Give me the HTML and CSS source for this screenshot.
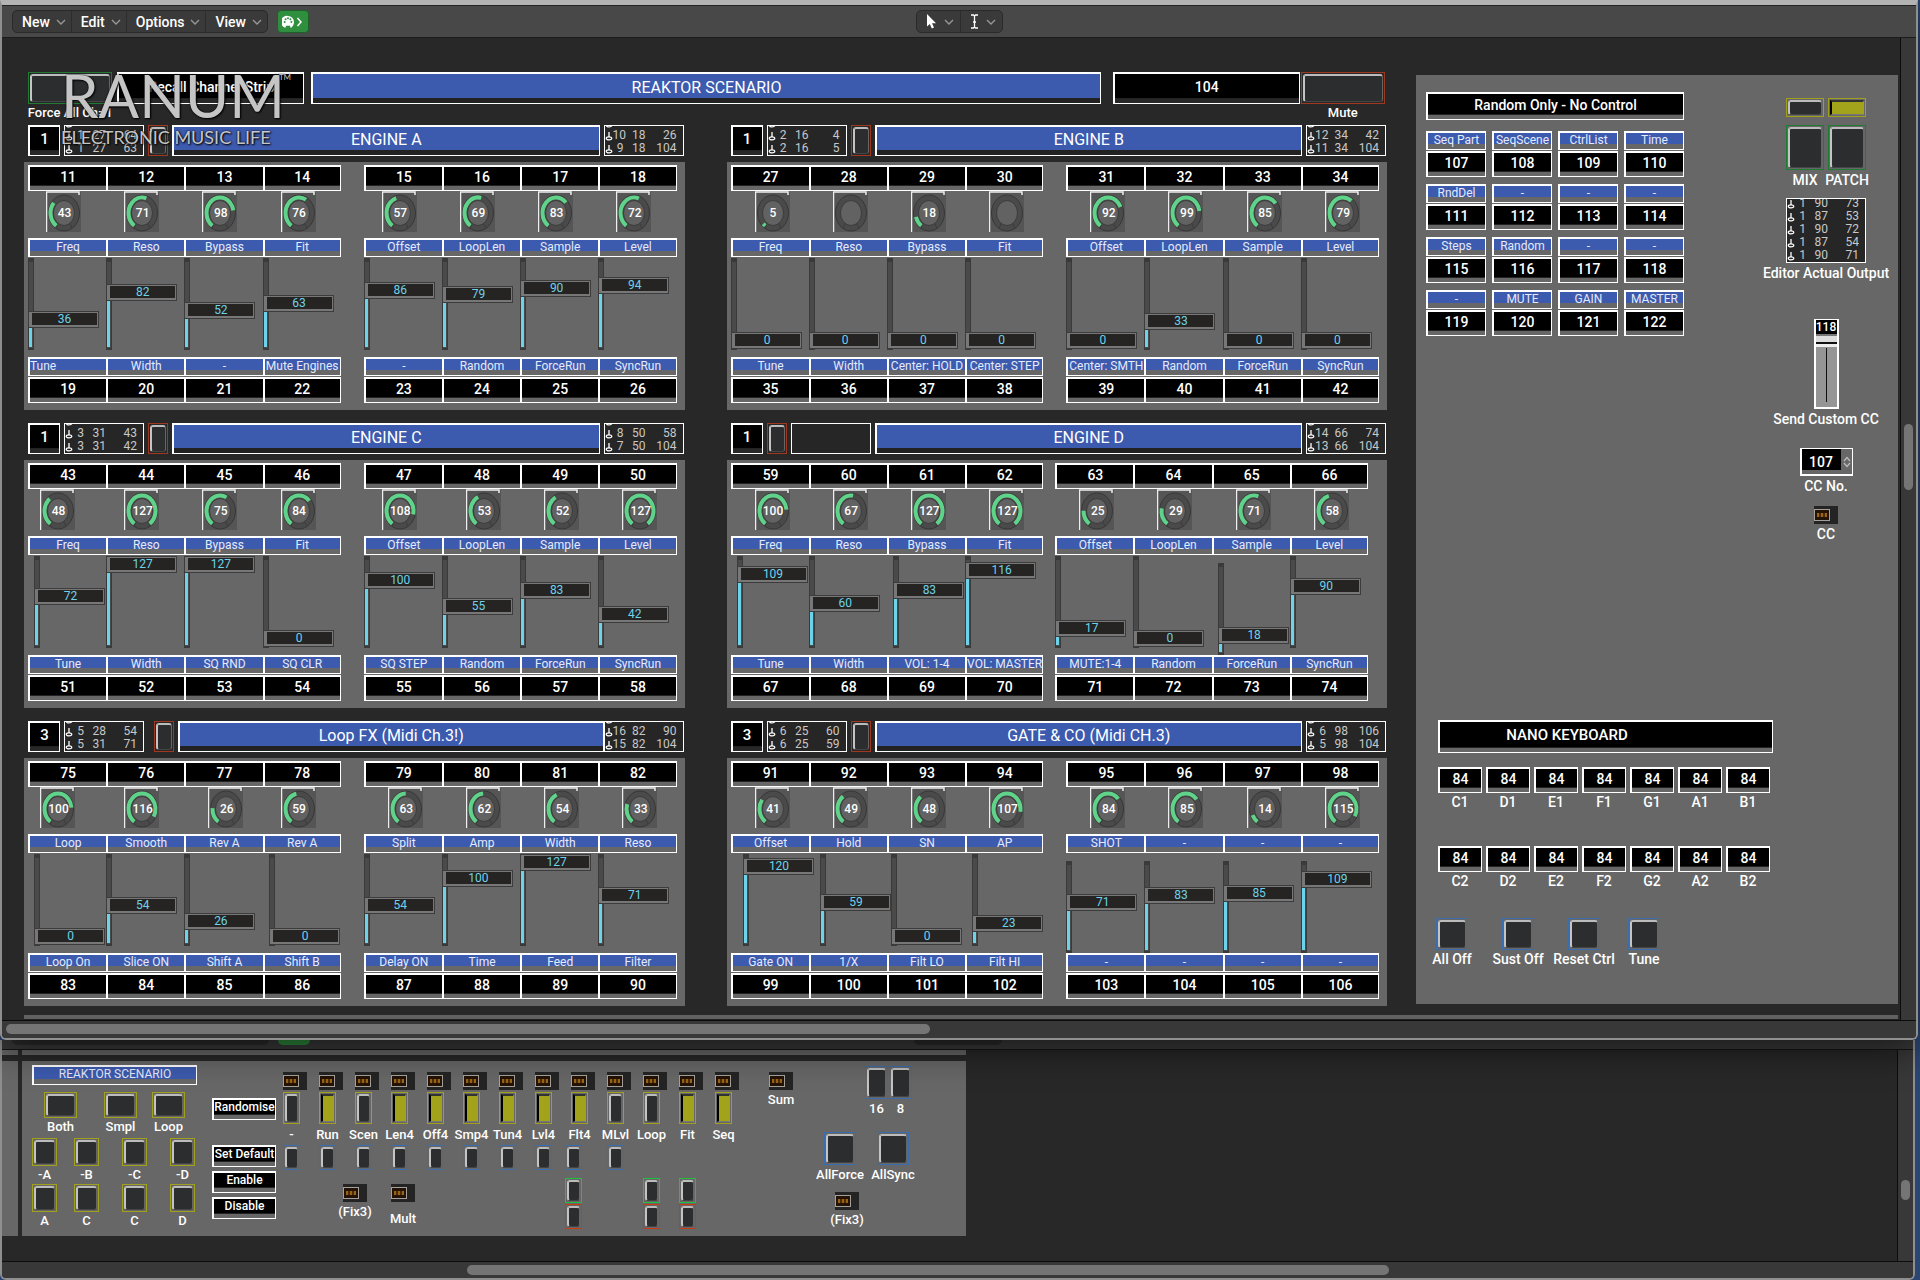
FILE: index.html
```
<!DOCTYPE html>
<html lang="en">
<head>
    <meta charset="UTF-8">
    <meta name="viewport" content="width=device-width, initial-scale=1.0">
    <title>Reaktor Scenario</title>
    <link rel="stylesheet" href="styles.css">
</head>
<body>
    <svg width="0" height="0" class="defs">
        <symbol id="chev" viewBox="0 0 10 6"><path d="M1 1l4 4 4-4" fill="none" stroke="#999" stroke-width="1.3"/></symbol>
        <symbol id="midi" viewBox="0 0 8 9"><path d="M4 0v5" stroke="#fff" stroke-width="1.3"/><ellipse cx="4" cy="6.300" rx="2.800" ry="1.500" fill="none" stroke="#fff" stroke-width="1.2"/></symbol>
    </svg>

    <div class="window front">
        <div class="toolbar">
            <div class="bar-left">
                <div class="menus">
                    <button>New <svg width="10" height="6"><use href="#chev"/></svg></button>
                    <button>Edit <svg width="10" height="6"><use href="#chev"/></svg></button>
                    <button>Options <svg width="10" height="6"><use href="#chev"/></svg></button>
                    <button>View <svg width="10" height="6"><use href="#chev"/></svg></button>
                </div>
                <button class="midi-btn" aria-label="MIDI out">
                    <svg width="22" height="14" viewBox="0 0 22 14">
                        <path d="M6 1a6 6 0 0 1 6 6c0 2-1 4-2.400 5.400H8.200v-1.600H3.800v1.600H2.400A6 6 0 0 1 6 1z" fill="#fff"/>
                        <g fill="#2f8f3e"><circle cx="2.600" cy="7" r="1"/><circle cx="3.600" cy="4.300" r="1"/><circle cx="6" cy="3.200" r="1"/><circle cx="8.400" cy="4.300" r="1"/><circle cx="9.400" cy="7" r="1"/></g>
                        <path d="M15.500 3l3.500 4-3.500 4" fill="none" stroke="#fff" stroke-width="1.500"/>
                    </svg>
                </button>
            </div>
            <div class="menus tools">
                <button aria-label="Pointer tool">
                    <svg width="11" height="15" viewBox="0 0 11 15"><path d="M1 0v12.500l2.800-2.500 2 4.500 2.200-1-2-4.300h4z" fill="#fff"/></svg>
                    <svg width="10" height="6"><use href="#chev"/></svg>
                </button>
                <button aria-label="Text tool">
                    <svg width="9" height="15" viewBox="0 0 9 15"><path d="M1 1h2.500l1 1 1-1H8M1 14h2.500l1-1 1 1H8M4.500 2v11M3 8h3" fill="none" stroke="#fff" stroke-width="1.300"/></svg>
                    <svg width="10" height="6"><use href="#chev"/></svg>
                </button>
            </div>
        </div>

        <div class="view">
            <div class="canvas">
                <div class="desk">
                    <main class="left">
                        <div class="logo">
                            <div class="logo-name">RANUM<sup>TM</sup></div>
                            <div class="logo-sub">ELECTRONIC MUSIC LIFE</div>
                        </div>
                        <div class="top-row">
                            <div class="field w-btn"><button class="pad green" id="force"></button><label for="force">Force All Ch=1</label></div>
                            <div class="box num w-strip">Recall Channel Strip</div>
                            <div class="box blue title w-title">REAKTOR SCENARIO</div>
                            <div class="box num w-chan">104</div>
                            <div class="field w-btn"><button class="pad red" id="mute"></button><label for="mute">Mute</label></div>
                        </div>
                        <div class="engines" id="engines"></div>
                    </main>

                    <aside class="side">
                        <div class="side-top">
                            <div class="random">
                                <div class="box num random-title">Random Only - No Control</div>
                                <div class="params" id="params"></div>
                            </div>
                            <div class="output">
                                <div class="pair small"><button class="pad yellow" aria-label="Mix off"></button><button class="pad yellow on" aria-label="Patch on"></button></div>
                                <div class="pair">
                                    <div class="field"><button class="pad green" id="mix"></button><label for="mix">MIX</label></div>
                                    <div class="field"><button class="pad green" id="patch"></button><label for="patch">PATCH</label></div>
                                </div>
                                <div class="events" id="output"></div>
                                <div class="cap">Editor Actual Output</div>
                                <div class="fader">
                                    <output>118</output>
                                    <div class="fader-cap"></div>
                                    <input type="range" id="custom" min="0" max="127" value="118">
                                </div>
                                <label class="cap" for="custom">Send Custom CC</label>
                                <div class="ccno">
                                    <input type="text" id="ccno" value="107">
                                    <svg width="8" height="12" viewBox="0 0 8 12"><path d="M1 5l3-3.500L7 5M1 7l3 3.500L7 7" fill="none" stroke="#bbb" stroke-width="1.300"/></svg>
                                </div>
                                <label class="cap" for="ccno">CC No.</label>
                                <span class="led cc-led"></span>
                                <div class="cap">CC</div>
                            </div>
                        </div>
                        <div class="nano">
                            <div class="box num nano-title">NANO KEYBOARD</div>
                            <div class="keys" id="keys"></div>
                            <div class="nano-btns">
                                <div class="field"><button class="pad blue-line" id="alloff"></button><label for="alloff">All Off</label></div>
                                <div class="field"><button class="pad blue-line" id="sust"></button><label for="sust">Sust Off</label></div>
                                <div class="field"><button class="pad blue-line" id="reset"></button><label for="reset">Reset Ctrl</label></div>
                                <div class="field"><button class="pad blue-line" id="tune"></button><label for="tune">Tune</label></div>
                            </div>
                        </div>
                    </aside>
                </div>
                <div class="next-strip"></div>
            </div>
            <div class="vscroll"><div class="thumb"></div></div>
        </div>
        <div class="hscroll"><div class="thumb"></div></div>
    </div>

    <div class="window back">
        <div class="back-bar"><i class="stub-menus"></i><i class="stub-midi"></i><i class="stub-tools"></i></div>
        <div class="view">
            <div class="canvas">
                <div class="edge"><i></i><i></i></div>
                <div class="board-row">
                    <div class="gutter"></div>
                    <section class="board">
                        <div class="scen">
                            <div class="box blue scen-title">REAKTOR SCENARIO</div>
                            <div class="scen-row big" id="rowBig"></div>
                            <div class="scen-row" id="rowMinus"></div>
                            <div class="scen-row" id="rowPlus"></div>
                        </div>
                        <div class="actions">
                            <button class="box num">Randomise</button>
                            <button class="box num">Set Default</button>
                            <button class="box num">Enable</button>
                            <button class="box num">Disable</button>
                        </div>
                        <div class="switches">
                            <div class="sw-cols" id="switches"></div>
                            <div class="sw-extra">
                                <div class="field fix"><span class="led"></span><span>(Fix3)</span></div>
                                <div class="field mult"><span class="led"></span><span>Mult</span></div>
                                <div class="duo"><button class="pad lime" aria-label="Flt4 enable"></button><button class="pad red2" aria-label="Flt4 disable"></button></div>
                                <div class="duo"><button class="pad lime" aria-label="Loop enable"></button><button class="pad red2" aria-label="Loop disable"></button></div>
                                <div class="duo"><button class="pad lime" aria-label="Fit enable"></button><button class="pad red2" aria-label="Fit disable"></button></div>
                            </div>
                        </div>
                        <div class="field sum"><span class="led"></span><span>Sum</span></div>
                        <div class="sync">
                            <div class="sync-row narrow">
                                <div class="field"><button class="pad blue-line" id="b16"></button><label for="b16">16</label></div>
                                <div class="field"><button class="pad blue-line" id="b8"></button><label for="b8">8</label></div>
                            </div>
                            <div class="sync-row">
                                <div class="field"><button class="pad blue-line" id="allforce"></button><label for="allforce">AllForce</label></div>
                                <div class="field"><button class="pad blue-line" id="allsync"></button><label for="allsync">AllSync</label></div>
                            </div>
                            <div class="field sync-fix"><span class="led"></span><span>(Fix3)</span></div>
                        </div>
                    </section>
                </div>
            </div>
            <div class="vscroll"><div class="thumb"></div></div>
        </div>
        <div class="hscroll"><div class="thumb"></div></div>
    </div>
    <script src="script.js"></script>
</body>
</html>
```
FILE: styles.css
```
*, *::after { box-sizing: border-box; }
body {
    margin: 0;
    background: #2b4673;
    color: #fff;
    font-family: Roboto, "Liberation Sans", sans-serif;
    font-size: 14px;
    font-weight: 500;
    line-height: 16px;
}
button, input {
    font: inherit;
    color: inherit;
    margin: 0;
    padding: 0;
    border: 0;
    background: none;
}
.defs { position: absolute; }
.window {
    background: #282828;
    border: 2px solid #8f8f8f;
    overflow: hidden;
}
.front {
    position: relative;
    z-index: 1;
    margin-right: 2px;
    border-top: 5px solid #b3b3b3;
    border-radius: 0 0 6px 6px;
    box-shadow: 0 8px 36px rgba(0, 0, 0, 0.6);
}
.back {
    margin-right: 5px;
    border-top: 0;
    border-radius: 0 0 6px 6px;
}

/* toolbar */
.toolbar {
    display: grid;
    grid-template-columns: 1fr auto 1fr;
    align-items: center;
    height: 33px;
    padding: 0 10px;
    background: #484848;
    border-top: 1px solid #222;
    border-bottom: 1px solid #1c1c1c;
}
.bar-left { display: flex; gap: 9px; }
.menus {
    display: flex;
    height: 23px;
    background: #3a3a3a;
    border: 1px solid #2a2a2a;
    border-radius: 5px;
}
.menus button {
    display: flex;
    align-items: center;
    gap: 6px;
    padding: 0 5px 0 9px;
}
.menus button + button { border-left: 1px solid #2c2c2c; }
.tools button { padding: 0 6px 0 9px; gap: 7px; }
.midi-btn {
    width: 32px;
    height: 23px;
    border-radius: 4px;
    background: #2f8f3e;
    border: 1px solid #1f5f2a;
    display: flex;
    align-items: center;
    justify-content: center;
}

/* scrolling */
.view { display: flex; }
.canvas { flex: 1; min-width: 0; }
.vscroll {
    width: 16px;
    background: #383838;
    border-left: 1px solid #0c0c0c;
    padding: 0 3px;
}
.hscroll {
    height: 18px;
    background: #383838;
    border-top: 1px solid #0c0c0c;
    padding: 3px 4px;
}
.back .hscroll { height: 17px; }
.thumb { background: #757575; border-radius: 5px; }
.front .vscroll .thumb { height: 66px; margin-top: 386px; }
.front .hscroll .thumb { height: 10px; width: 48.5%; }
.back .vscroll .thumb { height: 20px; margin-top: 130px; }
.back .hscroll .thumb { height: 10px; width: 48.5%; margin-left: 24.2%; }

/* shared boxes */
.box {
    border: solid #fff;
    border-width: 2px 1px 1px 2px;
    text-align: center;
    white-space: nowrap;
    display: flex;
    justify-content: center;
}
.num { background: linear-gradient(to top, transparent 4px, #222 4px, #222 5px, #000 5px); }
.blue { background: linear-gradient(to top, transparent 5px, #3c5aae 5px); color: #e6eafa; }
.title {
    background: linear-gradient(to top, #222 5px, #3c5aae 5px);
    font-size: 16px;
    font-weight: 400;
    line-height: 25px;
    color: #fff;
}
.pad {
    display: block;
    border: 1px solid #555;
    padding: 1px;
}
.pad::after {
    content: "";
    display: block;
    width: 100%;
    height: 100%;
    background: #2b2d2f;
    border: solid;
    border-width: 2px 1px 1px 2px;
    border-color: #bcbcbc #666 #444 #c4c4c4;
    border-radius: 3px;
}
.pad.green { border-color: #1f7a34; }
.pad.lime { border-color: #1fc23a; }
.pad.red { border-color: #a03820; }
.pad.red2 { border-color: #cc3a14; }
.pad.yellow { border-color: #a0a01c; }
.pad.blue-line { border-color: #3a6cb0; }
.pad.on::after { background: #a2a31a; border-color: #333 #a2a31a #777 #000; border-radius: 0; }
.field {
    display: flex;
    flex-direction: column;
    align-items: center;
    white-space: nowrap;
}
.led {
    display: block;
    width: 24px;
    height: 18px;
    background: #242424;
    padding: 3px 8px 3px 0;
}
.led::after {
    content: "";
    display: block;
    height: 12px;
    border: 1px solid #a5a09a;
    padding: 3px 2px;
    background: repeating-linear-gradient(90deg, #9a6414 0 2px, #4a2c08 2px 4px) content-box, #241204;
}
.events {
    display: flex;
    flex-direction: column;
    justify-content: flex-end;
    border: 1px solid #fff;
    background: #262626;
    width: 80px;
    overflow: hidden;
    font-size: 12px;
    font-weight: 400;
    line-height: 13px;
    color: #c8c8c8;
}
.event {
    display: grid;
    grid-template-columns: 8px 11px 22px 1fr;
    text-align: right;
    flex: none;
    height: 13px;
    padding-right: 6px;
}
.event svg { margin-top: 3px; }

/* desk */
.desk {
    display: grid;
    grid-template-columns: 1363fr 482fr;
    gap: 29px;
    padding: 34px 2px 0 22px;
}
.left { position: relative; }
.logo {
    position: absolute;
    z-index: 2;
    left: 37px;
    top: -9px;
    font-family: Lato, sans-serif;
    font-weight: 400;
    color: rgba(232, 232, 232, 0.85);
    text-shadow: 0 0 2px #000, 1px 1px 2px #000;
    pointer-events: none;
}
.logo-name { font-size: 60px; line-height: 64px; }
.logo-name sup { font-size: 8px; line-height: 8px; vertical-align: 38px; margin-left: -6px; }
.logo-sub { font-size: 18px; line-height: 20px; }
.top-row {
    display: flex;
    align-items: flex-start;
    height: 53px;
    padding: 0 2px 0 4px;
}
.top-row .box { height: 32px; line-height: 27px; }
.top-row .pad { width: 100%; height: 32px; }
.top-row label { font-size: 13px; line-height: 18px; }
.w-btn { flex: 85 1 0; min-width: 0; }
.w-strip { flex: 185 1 0; margin: 0 7px 0 5px; }
.w-title { flex: 792 1 0; }
.w-chan { flex: 185 1 0; margin: 0 1px 0 12px; }
.engines {
    display: grid;
    grid-template-columns: 1fr 1fr;
    gap: 13px 42px;
}

/* engine */
.engine-head {
    display: flex;
    gap: 4px;
    height: 31px;
    margin: 0 1px 6px 4px;
}
.engine-head .chan { width: 32px; line-height: 25px; font-size: 15px; }
.engine-head .pad { width: 20px; }
.engine-head .title { flex: 1; }
.engine-head .pad.nudged { margin-left: 6px; }
.engine-head .title.nudged { margin-right: -4px; }
.engine-body {
    display: flex;
    gap: 23px;
    padding: 3px 8px 7px 4px;
    background: #676767;
}
.engine-body.tight { gap: 12px; padding-right: 19px; }
.group { flex: 1; min-width: 0; }
.cols { display: grid; grid-template-columns: repeat(4, 1fr); }
.cols .box { border-right-width: 0; min-width: 0; }
.cols .box:last-child { border-right-width: 1px; }
.cols .num { height: 26px; line-height: 20px; }
.tag {
    height: 19px;
    font-size: 12px;
    font-weight: 400;
    line-height: 14px;
}
.tag.start { justify-content: flex-start; }
.cols.after { margin-top: 1px; }
.knobs { height: 41px; margin-bottom: 6px; }
.knob { display: grid; width: 35px; height: 41px; margin-left: 18px; }
.knob.near { margin-left: 12px; }
.knob.far { margin-left: 24px; }
.knob > * { grid-area: 1 / 1; }
.knob output {
    align-self: center;
    text-align: center;
    padding: 2px 0 0 2px;
    font-size: 12px;
}
.knob input { opacity: 0; width: 35px; height: 41px; }
.sliders { height: 92px; margin: 1px 0 7px; }
.slider { position: relative; width: 71px; height: 92px; }
.slider.in { margin-left: 6px; }
.slider.in2 { margin-left: 12px; }
.slider.low { margin-top: 7px; }
.slider input {
    display: block;
    appearance: none;
    writing-mode: vertical-lr;
    direction: rtl;
    width: 6px;
    height: 92px;
    background: #4a4a4a;
    border: solid #3a3a3a;
    border-width: 4px 1px 2px;
}
.slider input::-webkit-slider-thumb { appearance: none; width: 6px; height: 16px; }
.slider .fill {
    position: absolute;
    left: 1px;
    bottom: 3px;
    width: 3px;
    background: #6dd3ea;
}
.slider output {
    position: absolute;
    left: 0;
    width: 71px;
    height: 17px;
    border: solid #777;
    border-width: 2px 2px 3px 4px;
    outline: 1px solid #3c3c3c;
    outline-offset: -1px;
    background: #262323;
    color: #6dd3ea;
    font-size: 12px;
    font-weight: 400;
    line-height: 13px;
    text-align: center;
}

/* right side */
.side {
    display: flex;
    flex-direction: column;
    justify-content: space-between;
    margin: 3px 0 2px;
    padding: 17px 32px 37px 10px;
    background: #676767;
}
.side-top { display: flex; justify-content: space-between; }
.random { width: 258px; }
.random-title { height: 28px; line-height: 22px; margin-bottom: 11px; }
.params {
    display: grid;
    grid-template-columns: repeat(4, 1fr);
    gap: 7px 6px;
}
.params .num { height: 26px; line-height: 20px; margin-top: 1px; }
.output {
    display: flex;
    flex-direction: column;
    align-items: center;
    width: 80px;
    margin-top: 6px;
}
.pair { display: flex; gap: 4px; margin-bottom: 10px; }
.pair .field { width: 38px; }
.pair .pad { width: 38px; height: 45px; }
.pair.small { margin-bottom: 8px; }
.pair.small .pad { height: 19px; }
.pair label, .cap { padding-top: 2px; white-space: nowrap; }
.output .events { height: 65px; flex: none; }
.cap { height: 18px; }
.fader {
    position: relative;
    width: 25px;
    height: 90px;
    margin-top: 38px;
    border: 2px solid #fff;
    border-width: 1px 2px 2px;
    background: linear-gradient(#111, #111) 10px 28px / 1px 54px no-repeat #959595;
}
.fader output { display: block; background: #000; font-size: 12px; line-height: 14px; text-align: center; }
.fader-cap { height: 13px; background: linear-gradient(#777 0 2px, #ddd 2px 8px, #111 8px 10px, #eee 10px); }
.fader input { position: absolute; inset: 0; width: 21px; opacity: 0; }
.ccno {
    display: flex;
    align-items: center;
    width: 53px;
    height: 28px;
    margin-top: 21px;
    border: 2px solid #fff;
    border-width: 1px 1px 2px 2px;
    background: linear-gradient(to top, transparent 4px, #000 4px) no-repeat 0 0 / 39px 100%;
}
.ccno input { width: 39px; text-align: center; }
.ccno svg { margin-left: 2px; }
.cc-led { margin-top: 12px; flex: none; }
.nano { margin-left: 12px; }
.nano-title {
    width: 335px;
    height: 33px;
    font-size: 15px;
    line-height: 27px;
    padding-right: 78px;
    margin-bottom: 14px;
}
.keys { display: grid; grid-template-columns: repeat(7, 44px); gap: 35px 4px; }
.keys .num { height: 26px; line-height: 20px; width: 44px; }
.keys .field span { line-height: 18px; }
.nano-btns { display: flex; gap: 34px; margin: 28px 0 0 -2px; }
.nano-btns .field { width: 32px; }
.nano-btns .field:last-child { margin-left: -6px; }
.nano-btns .pad { width: 32px; height: 32px; }
.nano-btns label { padding-top: 1px; }
.next-strip { height: 5px; margin: 9px 2px 0 22px; background: #616161; border-bottom: 1px solid #222; }

/* window behind */
.back-bar {
    display: flex;
    height: 10px;
    background: #3a3a3a;
    border-bottom: 1px solid #151515;
    padding-left: 10px;
}
.back-bar i { height: 5px; background: #2c2c2c; border-radius: 0 0 5px 5px; }
.stub-menus { width: 257px; margin-right: 9px; }
.back-bar .stub-midi { width: 32px; background: #2f8f3e; }
.stub-tools { width: 88px; margin-left: 604px; }
.edge { display: flex; gap: 4px; height: 11px; padding-bottom: 6px; }
.edge i { background: #676767; }
.edge i:first-child, .gutter { width: 16px; }
.edge i:last-child { width: 944px; }
.board-row { display: flex; gap: 4px; height: 200px; padding-bottom: 25px; }
.gutter { background: #676767; }
.board {
    display: flex;
    align-items: flex-start;
    width: 944px;
    background: #676767;
    padding: 4px 0 0 10px;
    font-size: 13px;
}
.scen { width: 165px; }
.scen-title {
    height: 20px;
    font-size: 12px;
    font-weight: 400;
    line-height: 14px;
    margin-bottom: 7px;
}
.scen-row { display: flex; gap: 23px; height: 46px; }
.scen-row .field { width: 25px; }
.scen-row .field:first-child { margin-right: -6px; }
.scen-row .pad { width: 25px; height: 28px; }
.scen-row label { line-height: 18px; }
.scen-row.big { gap: 15px; padding-left: 12px; }
.scen-row.big .field { width: 33px; }
.scen-row.big .field:first-child { margin-right: 12px; }
.scen-row.big .pad { width: 33px; height: 26px; }
.actions {
    display: flex;
    flex-direction: column;
    gap: 4px;
    width: 64px;
    margin: 33px 0 0 15px;
}
.actions .box { width: 64px; height: 22px; font-size: 12px; line-height: 15px; }
.actions .box:first-child { margin-bottom: 21px; }
.switches { margin: 7px 0 0 7px; }
.sw-cols { display: flex; height: 98px; margin-bottom: 8px; }
.sw { width: 36px; display: flex; flex-direction: column; }
.sw .field { width: 17px; margin-top: 2px; }
.sw .pad { width: 17px; height: 32px; }
.sw label { line-height: 21px; }
.sw .mini { height: 25px; }
.sw .mini.out { margin-left: -6px; }
.sw-extra { display: flex; align-items: flex-start; padding-left: 60px; }
.sw-extra .field { width: 24px; margin-top: 6px; }
.fix span + span { line-height: 20px; }
.mult { margin: 0 150px 0 24px; }
.mult span + span { padding-top: 9px; }
.duo { display: flex; flex-direction: column; gap: 1px; }
.duo + .duo { margin-left: 61px; }
.duo + .duo + .duo { margin-left: 19px; }
.duo .pad { width: 17px; height: 25px; }
.sum { width: 24px; margin: 7px 0 0 18px; }
.sum span + span { line-height: 20px; }
.sync { margin-left: 31px; width: 88px; }
.sync-row { display: flex; gap: 21px; margin-bottom: 7px; }
.sync-row .field { width: 32px; }
.sync-row .pad { width: 32px; height: 33px; }
.sync-row label { line-height: 20px; }
.sync-row.narrow { gap: 1px; margin: 1px 0 13px; padding-left: 41px; }
.sync-row.narrow .field, .sync-row.narrow .pad { width: 23px; }
.sync-fix { width: 24px; margin-left: 11px; }
.sync-fix span + span { line-height: 20px; }
```
FILE: script.js
```
// each group: knob values, knob labels, slider values, bottom labels
const engines = [
    {
        chan: 1, name: "ENGINE A", first: 11,
        left: ["1 27 65", "1 27 64", "1 27 63"], right: ["9 17 104", "10 18 26", "9 18 104"],
        knobs: [43, 71, 98, 76, 57, 69, 83, 72],
        tags: ["Freq", "Reso", "Bypass", "Fit", "Offset", "LoopLen", "Sample", "Level"],
        sliders: [36, 82, 52, 63, 86, 79, 90, 94],
        low: ["Tune", "Width", "-", "Mute Engines", "-", "Random", "ForceRun", "SyncRun"],
        startTag: true
    },
    {
        chan: 1, name: "ENGINE B", first: 27,
        left: ["2 16 6", "2 16 4", "2 16 5"], right: ["11 33 104", "12 34 42", "11 34 104"],
        knobs: [5, 0, 18, 0, 92, 99, 85, 79],
        tags: ["Freq", "Reso", "Bypass", "Fit", "Offset", "LoopLen", "Sample", "Level"],
        sliders: [0, 0, 0, 0, 0, 33, 0, 0],
        low: ["Tune", "Width", "Center: HOLD", "Center: STEP", "Center: SMTH", "Random", "ForceRun", "SyncRun"],
        knobPos: "ffffffff"
    },
    {
        chan: 1, name: "ENGINE C", first: 43,
        left: ["3 31 44", "3 31 43", "3 31 42"], right: ["7 49 104", "8 50 58", "7 50 104"],
        knobs: [48, 127, 75, 84, 108, 53, 52, 127],
        tags: ["Freq", "Reso", "Bypass", "Fit", "Offset", "LoopLen", "Sample", "Level"],
        sliders: [72, 127, 127, 0, 100, 55, 83, 42],
        low: ["Tune", "Width", "SQ RND", "SQ CLR", "SQ STEP", "Random", "ForceRun", "SyncRun"],
        knobPos: "n....fff", sliderPos: "1......."
    },
    {
        chan: 1, name: "ENGINE D", first: 59, padFirst: true, tight: true,
        left: [], right: ["13 65 104", "14 66 74", "13 66 104"],
        knobs: [100, 67, 127, 127, 25, 29, 71, 58],
        tags: ["Freq", "Reso", "Bypass", "Fit", "Offset", "LoopLen", "Sample", "Level"],
        sliders: [109, 60, 83, 116, 17, 0, 18, 90],
        low: ["Tune", "Width", "VOL: 1-4", "VOL: MASTER", "MUTE:1-4", "Random", "ForceRun", "SyncRun"],
        knobPos: "ffffffff", sliderPos: "1.1...L."
    },
    {
        chan: 3, name: "Loop FX (Midi Ch.3!)", first: 75, nudged: true,
        left: ["5 31 72", "5 28 54", "5 31 71"], right: ["15 81 104", "16 82 90", "15 82 104"],
        knobs: [100, 116, 26, 59, 63, 62, 54, 33],
        tags: ["Loop", "Smooth", "Rev A", "Rev A", "Split", "Amp", "Width", "Reso"],
        sliders: [0, 54, 26, 0, 54, 100, 127, 71],
        low: ["Loop On", "Slice ON", "Shift A", "Shift B", "Delay ON", "Time", "Feed", "Filter"],
        knobPos: "n.f.ffff", sliderPos: "1..1...."
    },
    {
        chan: 3, name: "GATE & CO (Midi CH.3)", first: 91,
        left: ["6 25 61", "6 25 60", "6 25 59"], right: ["5 97 104", "6 98 106", "5 98 104"],
        knobs: [41, 49, 48, 107, 84, 85, 14, 115],
        tags: ["Offset", "Hold", "SN", "AP", "SHOT", "-", "-", "-"],
        sliders: [120, 59, 0, 23, 71, 83, 85, 109],
        low: ["Gate ON", "1/X", "Filt LO", "Filt HI", "-", "-", "-", "-"],
        knobPos: "ffffffff", sliderPos: "21.1llll"
    }
];

const knobClass = { n: "near", f: "far", ".": "" };
const sliderClass = { 1: "in", 2: "in2", l: "low", L: "in low", ".": "" };

function events(rows) {
    return rows.map(r => {
        const [a, b, c] = r.split(" ");
        return `<div class="event"><svg width="8" height="9"><use href="#midi"/></svg><span>${a}</span><span>${b}</span><span>${c}</span></div>`;
    }).join("");
}

function knob(value, name, pos) {
    const arc = "M10.3 34.7A13.5 15.5 0 1 1 25.7 34.7";
    const lit = value ? `<path d="${arc}" pathLength="127" stroke-dasharray="${value} 200" fill="none" stroke="#5fd38a" stroke-width="4"/>` : "";
    return `<div><div class="knob ${knobClass[pos]}">
        <svg width="35" height="41" viewBox="0 0 35 41">
            <path d="M0 1h35v40H0z" fill="#555"/>
            <ellipse cx="18" cy="22" rx="15.500" ry="18" fill="#4a4a4a" stroke="#383838"/>
            <path d="M18 22L26 37M18 22L10 37" stroke="#3a3a3a"/>
            ${lit}
            <ellipse cx="18" cy="22" rx="10.500" ry="12.500" fill="#626262" stroke="#3c3c3c"/>
            <path d="M.5 41V1M0 1h33v3" fill="none" stroke="#eee" stroke-width="1.500"/>
        </svg>
        <output>${value || ""}</output>
        <input type="range" min="0" max="127" value="${value}" aria-label="${name}">
    </div></div>`;
}

function slider(value, name, pos) {
    const top = Math.round((127 - value) * 74 / 127);
    return `<div><div class="slider ${sliderClass[pos]}">
        <input type="range" min="0" max="127" value="${value}" aria-label="${name}">
        <div class="fill" style="height:${Math.max(72 - top, 0)}px"></div>
        <output style="top:${top}px">${value}</output>
    </div></div>`;
}

function group(e, from) {
    const idx = [0, 1, 2, 3].map(i => i + from);
    const kp = e.knobPos || "........";
    const sp = e.sliderPos || "........";
    return `<div class="group">
        <div class="cols">${idx.map(i => `<div class="box num">${e.first + i}</div>`).join("")}</div>
        <div class="cols knobs">${idx.map(i => knob(e.knobs[i], e.tags[i], kp[i])).join("")}</div>
        <div class="cols">${idx.map(i => `<div class="box blue tag">${e.tags[i]}</div>`).join("")}</div>
        <div class="cols sliders">${idx.map(i => slider(e.sliders[i], e.low[i], sp[i])).join("")}</div>
        <div class="cols">${idx.map(i => `<div class="box blue tag ${e.startTag && i === 0 ? "start" : ""}">${e.low[i]}</div>`).join("")}</div>
        <div class="cols after">${idx.map(i => `<div class="box num">${e.first + 8 + i}</div>`).join("")}</div>
    </div>`;
}

document.getElementById("engines").innerHTML = engines.map(e => {
    const list = `<div class="events">${events(e.left)}</div>`;
    const pad = `<button class="pad red ${e.nudged ? "nudged" : ""}" aria-label="Mute ${e.name}"></button>`;
    return `<section class="engine">
        <div class="engine-head">
            <div class="box num chan">${e.chan}</div>
            ${e.padFirst ? pad + list : list + pad}
            <div class="box title ${e.nudged ? "nudged" : ""}">${e.name.replace("&", "&amp;")}</div>
            <div class="events">${events(e.right)}</div>
        </div>
        <div class="engine-body ${e.tight ? "tight" : ""}">${group(e, 0)}${group(e, 4)}</div>
    </section>`;
}).join("");

const params = ["Seq Part", "SeqScene", "CtrlList", "Time", "RndDel", "-", "-", "-", "Steps", "Random", "-", "-", "-", "MUTE", "GAIN", "MASTER"];
document.getElementById("params").innerHTML = params.map((p, i) =>
    `<div><div class="box blue tag">${p}</div><div class="box num">${107 + i}</div></div>`).join("");

document.getElementById("output").innerHTML = events(["1 90 73", "1 87 53", "1 90 72", "1 87 54", "1 90 71"]);

document.getElementById("keys").innerHTML = [1, 2].map(o => [..."CDEFGAB"].map(k =>
    `<div class="field"><div class="box num">84</div><span>${k}${o}</span></div>`).join("")).join("");

function pads(id, names) {
    document.getElementById(id).innerHTML = names.map((n, i) =>
        `<div class="field"><button class="pad yellow" id="${id}${i}"></button><label for="${id}${i}">${n}</label></div>`).join("");
}
pads("rowBig", ["Both", "Smpl", "Loop"]);
pads("rowMinus", ["-A", "-B", "-C", "-D"]);
pads("rowPlus", ["A", "C", "C", "D"]);

const switches = ["-", "Run*", "Scen", "Len4*", "Off4*", "Smp4*", "Tun4*", "Lvl4*", "Flt4*", "MLvl", "Loop", "Fit*", "Seq*"];
document.getElementById("switches").innerHTML = switches.map((s, i) => {
    const on = s.endsWith("*");
    const name = s.replace("*", "");
    const mini = i < 10 ? `<button class="pad blue-line mini ${i === 8 ? "out" : ""}" aria-label="${name} default"></button>` : "";
    return `<div class="sw"><span class="led"></span>
        <div class="field"><button class="pad yellow ${on ? "on" : ""}" id="sw${i}"></button><label for="sw${i}">${name}</label></div>
        ${mini}</div>`;
}).join("");
```
